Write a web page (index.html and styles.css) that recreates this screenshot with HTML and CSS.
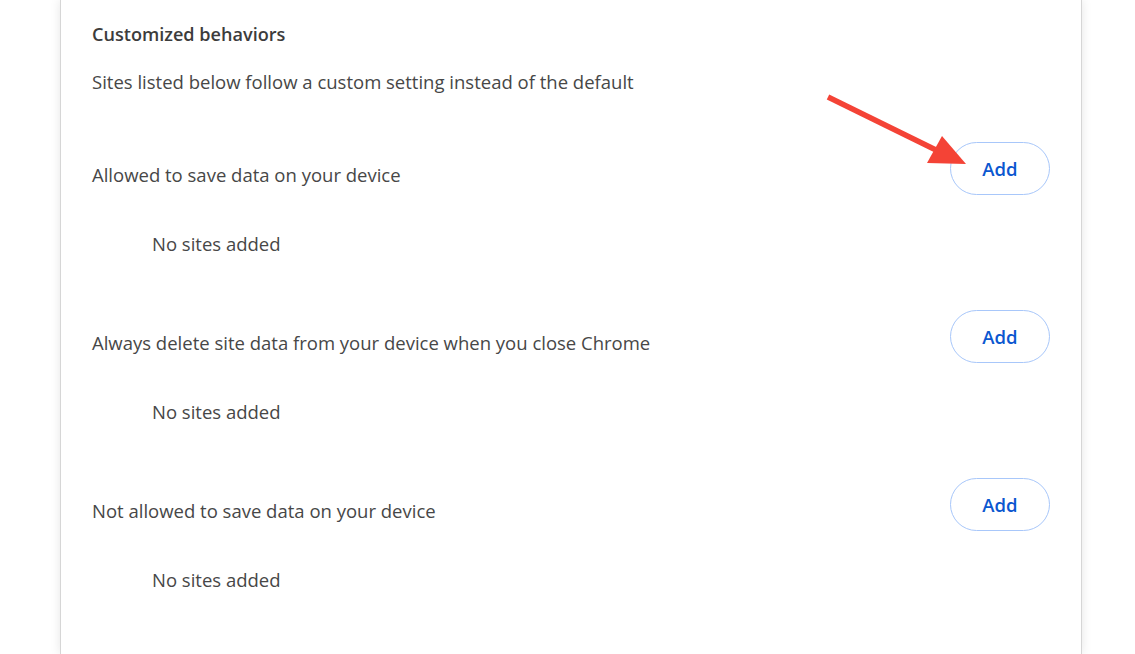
FILE: index.html
```html
<!DOCTYPE html>
<html>
<head>
<meta charset="utf-8">
<link rel="stylesheet" href="styles.css">
</head>
<body>
<div class="page">
  <main class="card">
    <h2 class="heading">Customized behaviors</h2>
    <p class="desc">Sites listed below follow a custom setting instead of the default</p>

    <section class="group">
      <div class="row">
        <span class="label">Allowed to save data on your device</span>
        <button class="add">Add</button>
      </div>
      <div class="empty">No sites added</div>
    </section>

    <section class="group">
      <div class="row">
        <span class="label">Always delete site data from your device when you close Chrome</span>
        <button class="add">Add</button>
      </div>
      <div class="empty">No sites added</div>
    </section>

    <section class="group">
      <div class="row">
        <span class="label">Not allowed to save data on your device</span>
        <button class="add">Add</button>
      </div>
      <div class="empty">No sites added</div>
    </section>

    <svg class="arrow" width="1135" height="200" viewBox="0 0 1135 200" aria-hidden="true">
      <line x1="828" y1="97" x2="938" y2="151" stroke="#f44336" stroke-width="5.5" stroke-linecap="butt"/>
      <polygon points="942,136 927,163 966,164" fill="#f44336"/>
    </svg>
  </main>
</div>
</body>
</html>
```

FILE: styles.css
```css
html, body {
  margin: 0;
  padding: 0;
  background: #ffffff;
  height: 100%;
  overflow: hidden;
}

.page {
  display: flex;
  height: 654px;
  padding-left: 60px;
  box-sizing: border-box;
}

.card {
  width: 1022px;
  background: #ffffff;
  border-left: 1px solid #d6d6d6;
  border-right: 1px solid #d6d6d6;
  box-shadow: 0 0 10px rgba(0, 0, 0, 0.10);
  padding: 20px 31px 0 31px;
  box-sizing: border-box;
  font-family: "Open Sans", "Noto Sans", "Liberation Sans", sans-serif;
  color: #474747;
}

.heading {
  margin: 0;
  font-size: 18.1px;
  line-height: 28px;
  font-weight: 600;
  color: #3c3c3c;
}

.desc {
  margin: 20px 0 0 0;
  font-size: 18.5px;
  line-height: 28px;
  font-weight: 400;
}

.group {
  margin-top: 46px;
}

.group + .group {
  margin-top: 52px;
}

.row {
  display: flex;
  justify-content: space-between;
  align-items: flex-start;
}

.label {
  margin-top: 19px;
  font-size: 18.5px;
  line-height: 28px;
}

.add {
  width: 100px;
  height: 53px;
  border: 1px solid #a8c7fa;
  border-radius: 27px;
  background: #ffffff;
  color: #0b57d0;
  font-family: "Open Sans", "Noto Sans", "Liberation Sans", sans-serif;
  font-size: 18.5px;
  font-weight: 600;
  padding: 0;
}

.empty {
  margin-top: 35px;
  padding-left: 60px;
  font-size: 18.5px;
  line-height: 28px;
}

.arrow {
  position: absolute;
  left: 0;
  top: 0;
  pointer-events: none;
}
```
